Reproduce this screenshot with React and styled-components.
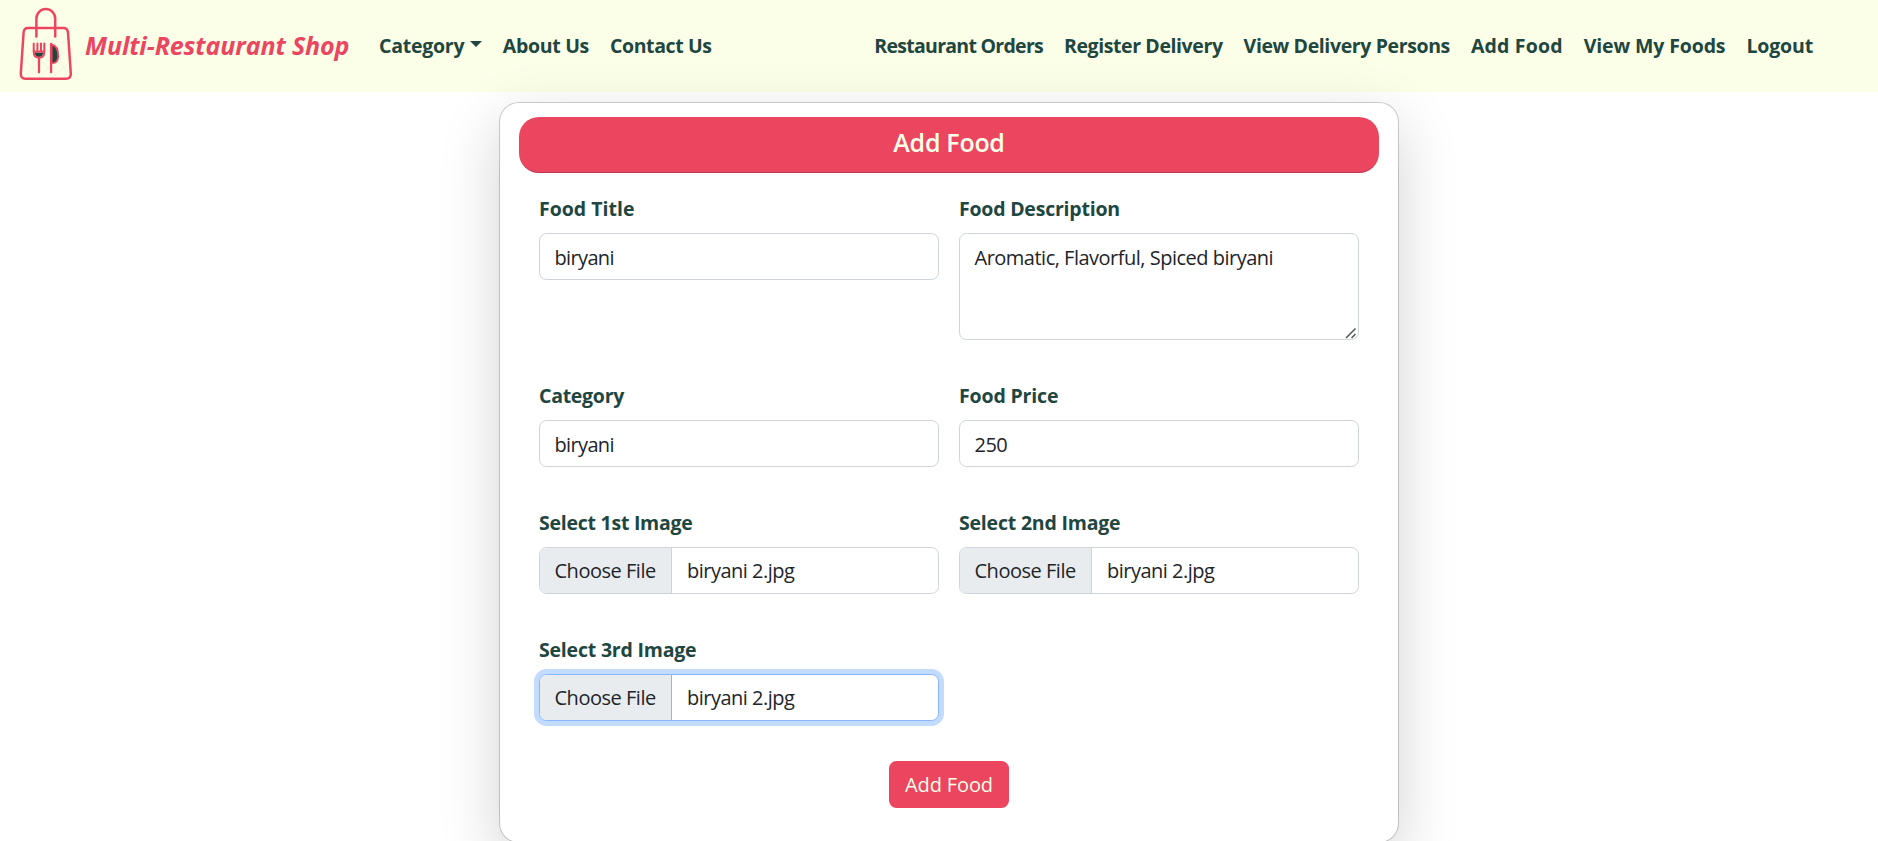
import React from 'react';
import styled, { createGlobalStyle, css } from 'styled-components';

const red = '#EB455F';
const cream = '#FCFFE7';
const teal = '#20463F';

const GlobalStyle = createGlobalStyle`
  * { box-sizing: border-box; }
  body {
    margin: 0;
    height: 841px;
    overflow: hidden;
    background: #fff;
    color: #212529;
    font-family: 'Open Sans', 'Noto Sans', sans-serif;
    font-size: 20px;
    line-height: 30px;
  }
`;

const Navbar = styled.nav`
  display: flex;
  align-items: center;
  height: 92px;
  padding: 0 54.5px 0 15px;
  background: ${cream};
`;

const Logo = styled.svg`
  width: 60px;
  height: 92px;
  flex: none;
`;

const Brand = styled.a`
  margin-left: 10px;
  padding-bottom: 3px;
  width: 283.5px;
  color: ${red};
  font-size: 25px;
  font-weight: 700;
  font-style: italic;
  letter-spacing: -0.1px;
  white-space: nowrap;
`;

const NavList = styled.div`
  display: flex;
  padding-bottom: 1px;
  margin-left: ${(p) => (p.$end ? 'auto' : '0')};
`;

const NavLink = styled.a`
  display: flex;
  align-items: center;
  padding: 0 10.5px;
  color: ${teal};
  font-size: 19.5px;
  font-weight: 700;
  white-space: nowrap;
  letter-spacing: ${(p) => p.$track || 0}px;
`;

const Caret = styled.span`
  margin: -3px 0 0 5.5px;
  border: 6px solid transparent;
  border-top-color: ${teal};
  border-bottom: 0;
`;

const Card = styled.main`
  width: 900px;
  height: 741px;
  margin: 10px 0 0 499px;
  padding: 14px 19px;
  border: 1px solid rgba(0, 0, 0, 0.175);
  border-radius: 20px;
  background: #fff;
  background-clip: padding-box;
  box-shadow: 0 20px 60px rgba(0, 0, 0, 0.175);
`;

const CardHeader = styled.header`
  height: 56px;
  padding-top: 10px;
  border-bottom: 1px solid rgba(0, 0, 0, 0.175);
  border-radius: 20px;
  background: ${red};
  color: ${cream};
  text-align: center;
`;

const Title = styled.h5`
  margin: 0;
  font-size: 25px;
  font-weight: 600;
  line-height: 30px;
  letter-spacing: -0.28px;
`;

const Form = styled.form`
  display: grid;
  grid-template-columns: 400px 400px;
  gap: 40px 20px;
  padding: 20px 20px 0;
`;

const Field = styled.div`
  display: flex;
  flex-direction: column;
`;

const Label = styled.label`
  height: 40px;
  padding-top: 1px;
  color: ${teal};
  font-size: 19.5px;
  font-weight: 700;
  letter-spacing: ${(p) => p.$track || 0}px;
`;

const control = css`
  width: 100%;
  height: 47px;
  border: 1px solid #ced4da;
  border-radius: 7.5px;
  background: #fff;
  color: #212529;
  font: inherit;
  outline: none;
`;

const Input = styled.input`
  ${control}
  padding: 1px 14.5px 0;
  letter-spacing: ${(p) => p.$track || 0}px;
`;

const AreaWrap = styled.div`
  position: relative;
  height: 107px;
`;

const TextArea = styled.textarea`
  ${control}
  display: block;
  height: 107px;
  padding: 9px 14.5px;
  resize: none;
  letter-spacing: -0.5px;
`;

const Grip = styled.svg`
  position: absolute;
  right: 2px;
  bottom: 1px;
  width: 12px;
  height: 12px;
`;

const FileBox = styled.div`
  ${control}
  display: flex;
  overflow: hidden;
  ${(p) =>
    p.$focused &&
    css`
      border-color: #86b7fe;
      box-shadow: 0 0 0 5px rgba(13, 110, 253, 0.25);
    `}
`;

const FileButton = styled.span`
  width: 132px;
  padding: 8px 0 0 14.5px;
  border-right: 1px solid ${(p) => (p.$focused ? '#86b7fe' : '#ced4da')};
  background: #e9ecef;
  letter-spacing: -0.48px;
  white-space: nowrap;
`;

const FileName = styled.span`
  padding: 8px 0 0 15px;
  letter-spacing: -0.5px;
`;

const Actions = styled.div`
  grid-column: 1 / -1;
  display: flex;
  justify-content: center;
`;

const SubmitButton = styled.button`
  width: 120px;
  height: 47px;
  padding: 1px 0 0;
  border: 0;
  border-radius: 7.5px;
  background: ${red};
  color: ${cream};
  font: inherit;
  letter-spacing: -0.14px;
`;

function BagLogo() {
  return (
    <Logo viewBox="15 0 60 92" fill="none" stroke={red} strokeWidth="2.5" strokeLinecap="round" strokeLinejoin="round">
      <path
        d="M27 57l20-20M27 74l30-32M40 76l28-28M55 76l13-13M26 45l30 31M34 36l34 36M48 37l18 18M25 60l15 15"
        stroke="#e4e8d3"
        strokeWidth="0.5"
      />
      <path d="M28 28H63.5Q67.6 28 68 32.5L70.8 73.5Q71 78.7 66 78.7H25.5Q20.5 78.7 20.8 73.5L23.6 32.5Q24 28 28 28Z" />
      <path d="M36.4 36.5V18.5A9.4 9.4 0 0 1 55.2 18.5V36.5" />
      <path d="M34.5 52.5H43.5Q42.5 57 39 57T34.5 52.5Z" fill={teal} stroke="none" />
      <path d="M33.7 43.6V51.5Q33.7 57.8 39 57.8T44.3 51.5V43.6M37.4 43.6V51.5M41 43.6V51.5" strokeWidth="2" />
      <path d="M34 51.5H44" strokeWidth="2" />
      <path d="M39 58V72.3" strokeWidth="2.3" />
      <path d="M51.5 44.5C56 45.5 58.4 50 58.2 56.5C58 61 56 63.3 51.5 63Z" fill={teal} strokeWidth="1.8" />
      <path d="M51.1 44V72.3" strokeWidth="2.3" />
    </Logo>
  );
}

const leftLinks = [
  { text: 'About Us', track: -0.3 },
  { text: 'Contact Us', track: -0.4 },
];

const rightLinks = [
  { text: 'Restaurant Orders', track: -0.72 },
  { text: 'Register Delivery', track: -0.4 },
  { text: 'View Delivery Persons', track: -0.38 },
  { text: 'Add Food', track: 0.17 },
  { text: 'View My Foods', track: -0.12 },
  { text: 'Logout', track: -0.15 },
];

function FileField({ label, track, focused }) {
  return (
    <Field>
      <Label $track={track}>{label}</Label>
      <FileBox $focused={focused}>
        <FileButton $focused={focused}>Choose File</FileButton>
        <FileName>biryani 2.jpg</FileName>
      </FileBox>
    </Field>
  );
}

export default function App() {
  return (
    <>
      <GlobalStyle />
      <Navbar>
        <BagLogo />
        <Brand>Multi-Restaurant Shop</Brand>
        <NavList>
          <NavLink $track={-0.25}>
            Category
            <Caret />
          </NavLink>
          {leftLinks.map((l) => (
            <NavLink key={l.text} $track={l.track}>{l.text}</NavLink>
          ))}
        </NavList>
        <NavList $end>
          {rightLinks.map((l) => (
            <NavLink key={l.text} $track={l.track}>{l.text}</NavLink>
          ))}
        </NavList>
      </Navbar>
      <Card>
        <CardHeader>
          <Title>Add Food</Title>
        </CardHeader>
        <Form>
          <Field>
            <Label $track={0}>Food Title</Label>
            <Input defaultValue="biryani" $track={-0.65} />
          </Field>
          <Field>
            <Label $track={-0.22}>Food Description</Label>
            <AreaWrap>
              <TextArea defaultValue="Aromatic, Flavorful, Spiced biryani" />
              <Grip viewBox="0 0 12 12" stroke="#555" strokeWidth="1.5">
                <path d="M1 11L10.5 1.5M6.5 11L10.5 7" />
              </Grip>
            </AreaWrap>
          </Field>
          <Field>
            <Label $track={-0.27}>Category</Label>
            <Input defaultValue="biryani" $track={-0.65} />
          </Field>
          <Field>
            <Label $track={-0.15}>Food Price</Label>
            <Input defaultValue="250" $track={-0.5} />
          </Field>
          <FileField label="Select 1st Image" track={-0.25} />
          <FileField label="Select 2nd Image" track={-0.2} />
          <FileField label="Select 3rd Image" track={-0.2} focused />
          <Actions>
            <SubmitButton type="button">Add Food</SubmitButton>
          </Actions>
        </Form>
      </Card>
    </>
  );
}
